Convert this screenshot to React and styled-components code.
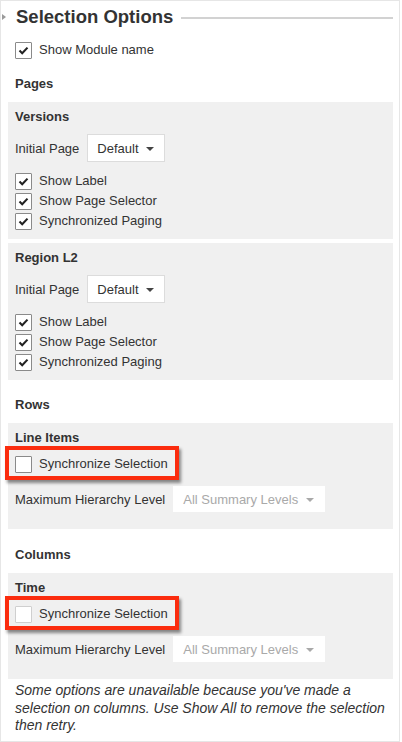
import React from "react";
import styled, { createGlobalStyle } from "styled-components";

const Global = createGlobalStyle`
  html, body { margin: 0; padding: 0; background: #ffffff; }
  body { font-family: "Liberation Sans", Arial, Helvetica, sans-serif; color: #333333; }
  * { box-sizing: border-box; }
`;

const Panel = styled.div`
  width: 400px;
  height: 742px;
  border: 1px solid #e6e6e6;
  padding: 4px 6px 0 7px;
  display: flex;
  flex-direction: column;
  font-size: 13px;
  background: #fff;
  overflow: hidden;
`;

const Header = styled.div`
  display: flex;
  align-items: center;
  height: 24px;
  margin-left: -7px;
`;

const Disclosure = styled.span`
  width: 0;
  height: 0;
  border-top: 3px solid transparent;
  border-bottom: 3px solid transparent;
  border-left: 4px solid #9a9a9a;
  margin: 0 10px 0 1px;
`;

const Title = styled.h2`
  margin: 0;
  font-size: 18.5px;
  line-height: 24px;
  font-weight: bold;
  color: #333;
  white-space: nowrap;
`;

const Rule = styled.div`
  flex: 1;
  height: 2px;
  background: #d2d2d2;
  margin-left: 8px;
  margin-top: 1px;
`;

const SectionTitle = styled.div`
  font-weight: bold;
  line-height: 20px;
  margin: ${(p) => p.$top || 14}px 0 0 7px;
`;

const GroupBox = styled.div`
  background: #f0f0f0;
  margin-top: ${(p) => p.$top || 8}px;
  padding: 5px 6px ${(p) => p.$bottom || 8}px 7px;
  display: flex;
  flex-direction: column;
  align-items: flex-start;
`;

const GroupTitle = styled.div`
  font-weight: bold;
  line-height: 20px;
`;

const CheckRow = styled.label`
  position: relative;
  display: inline-flex;
  align-items: center;
  height: 20px;
  gap: 7px;
  margin-left: ${(p) => p.$indent || 0}px;
  line-height: 20px;
  white-space: nowrap;
  color: #333;
`;

const Box = styled.span`
  width: 17px;
  height: 17px;
  background: #fff;
  border: 1px solid ${(p) => (p.$disabled ? "#cfcfcf" : "#8a8a8a")};
  border-radius: 1px;
  display: inline-flex;
  align-items: center;
  justify-content: center;
  flex: none;
`;

const Highlight = styled.span`
  position: absolute;
  top: -8px;
  bottom: -6px;
  left: -10px;
  right: -11px;
  border: 4px solid #fb2c0e;
  box-shadow: 2px 3px 3px rgba(0, 0, 0, 0.45);
  pointer-events: none;
`;

const Checks = styled.div`
  display: flex;
  flex-direction: column;
  margin-top: ${(p) => p.$top || 0}px;
`;

const FieldRow = styled.div`
  display: flex;
  align-items: center;
  gap: ${(p) => p.$gap || 8}px;
  margin-top: ${(p) => p.$top || 0}px;
`;

const Select = styled.div`
  height: ${(p) => p.$h || 28}px;
  display: inline-flex;
  align-items: center;
  gap: ${(p) => (p.$disabled ? 8 : 7)}px;
  padding: 0 10px 0 9px;
  background: #fff;
  border: 1px solid ${(p) => (p.$disabled ? "#ffffff" : "#dcdcdc")};
  color: ${(p) => (p.$disabled ? "#a9a9a9" : "#333")};
  white-space: nowrap;
`;

const Caret = styled.span`
  width: 0;
  height: 0;
  border-left: 4px solid transparent;
  border-right: 4px solid transparent;
  border-top: 4px solid ${(p) => (p.$disabled ? "#a9a9a9" : "#444")};
  margin-top: 2px;
`;

const Note = styled.p`
  margin: 3px 0 0 7px;
  font-style: italic;
  line-height: 17.5px;
  font-size: 14px;
  color: #333;
  padding-right: 2px;
`;

const Check = () => (
  <svg width="11" height="9" viewBox="0 0 11 9">
    <path d="M1.5 4.6 L4.2 7.2 L9.5 1.6" fill="none" stroke="#222" strokeWidth="2.1" />
  </svg>
);

const Checkbox = ({ label, checked, disabled, highlight, indent }) => (
  <CheckRow $indent={indent}>
    <Box $disabled={disabled}>{checked && <Check />}</Box>
    <span>{label}</span>
    {highlight && <Highlight />}
  </CheckRow>
);

const Dropdown = ({ value, disabled, h }) => (
  <Select $disabled={disabled} $h={h}>
    <span>{value}</span>
    <Caret $disabled={disabled} />
  </Select>
);

const PageGroup = ({ name }) => (
  <GroupBox $top={name === "Versions" ? 8 : 4}>
    <GroupTitle>{name}</GroupTitle>
    <FieldRow $top={7} $gap={8}>
      <span>Initial Page</span>
      <Dropdown value="Default" />
    </FieldRow>
    <Checks $top={9}>
      <Checkbox checked label="Show Label" />
      <Checkbox checked label="Show Page Selector" />
      <Checkbox checked label="Synchronized Paging" />
    </Checks>
  </GroupBox>
);

const SelectionGroup = ({ name, disabled }) => (
  <GroupBox $bottom={17}>
    <GroupTitle>{name}</GroupTitle>
    <Checks $top={6}>
      <Checkbox label="Synchronize Selection" disabled={disabled} highlight />
    </Checks>
    <FieldRow $top={12} $gap={8}>
      <span>Maximum Hierarchy Level</span>
      <Dropdown value="All Summary Levels" disabled h={26} />
    </FieldRow>
  </GroupBox>
);

export default function App() {
  return (
    <>
      <Global />
      <Panel>
        <Header>
          <Disclosure />
          <Title>Selection Options</Title>
          <Rule />
        </Header>
        <Checks $top={11}>
          <Checkbox checked label="Show Module name" indent={7} />
        </Checks>
        <SectionTitle>Pages</SectionTitle>
        <PageGroup name="Versions" />
        <PageGroup name="Region L2" />
        <SectionTitle $top={15}>Rows</SectionTitle>
        <SelectionGroup name="Line Items" />
        <SectionTitle $top={16}>Columns</SectionTitle>
        <SelectionGroup name="Time" disabled />
        <Note>
          Some options are unavailable because you've made a selection on columns. Use Show All to
          remove the selection then retry.
        </Note>
      </Panel>
    </>
  );
}
